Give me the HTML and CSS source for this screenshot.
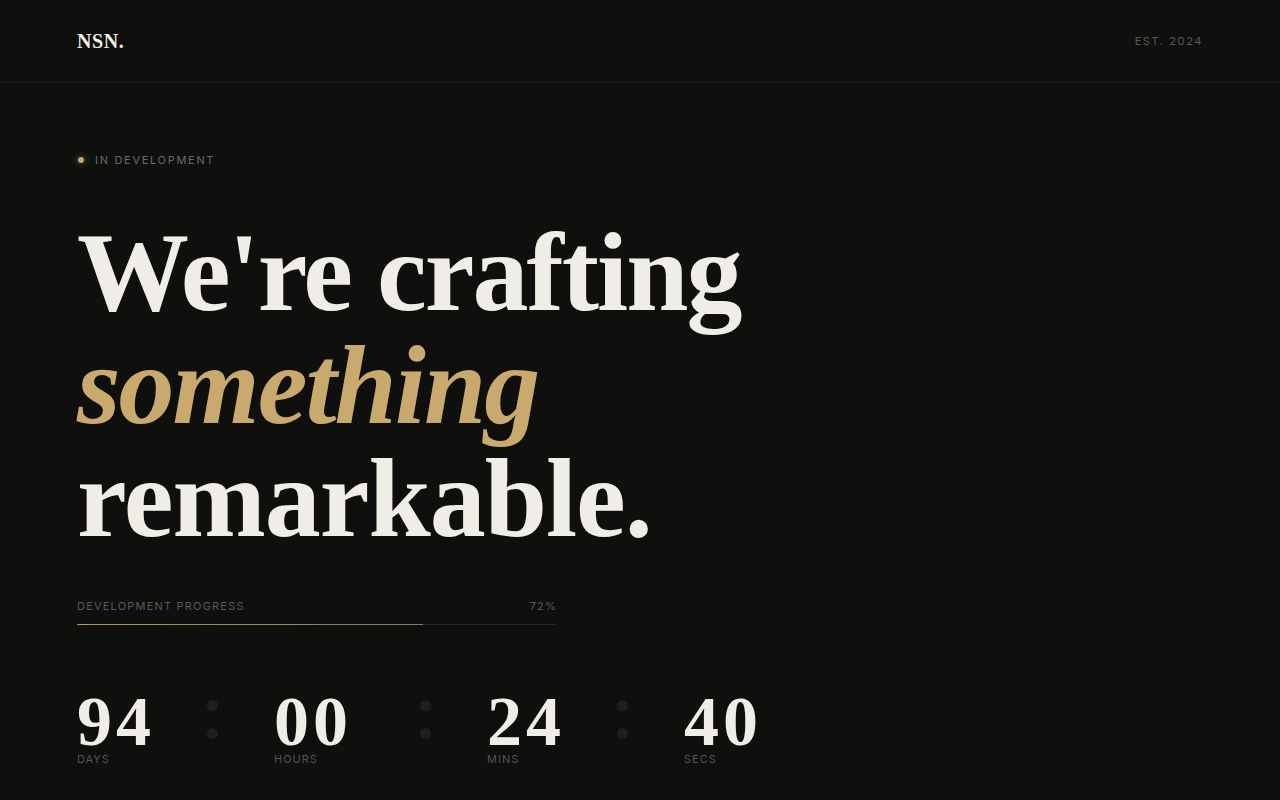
FILE: index.html
```html
<!DOCTYPE html>
<html lang="en">
<head>
<meta charset="utf-8">
<title>NSN. — In development</title>
<link rel="stylesheet" href="styles.css">
</head>
<body>
<header class="topbar">
  <div class="logo">NSN.</div>
  <div class="est">EST. 2024</div>
</header>
<main class="hero">
  <div class="badge"><span class="dot"></span><span class="badge-text">IN DEVELOPMENT</span></div>
  <h1 class="title">
    <span class="line">We're crafting</span>
    <span class="line accent">something</span>
    <span class="line last">remarkable.</span>
  </h1>
  <section class="progress">
    <div class="progress-head"><span>DEVELOPMENT PROGRESS</span><span>72%</span></div>
    <div class="track"><div class="fill" style="width:72%"></div></div>
  </section>
  <section class="timer">
    <div class="unit"><span class="num">94</span><span class="lbl">DAYS</span></div>
    <div class="colon"><span></span><span></span></div>
    <div class="unit wide"><span class="num">00</span><span class="lbl">HOURS</span></div>
    <div class="colon"><span></span><span></span></div>
    <div class="unit"><span class="num">24</span><span class="lbl">MINS</span></div>
    <div class="colon"><span></span><span></span></div>
    <div class="unit"><span class="num">40</span><span class="lbl">SECS</span></div>
  </section>
</main>
</body>
</html>
```
FILE: styles.css
```css
* { box-sizing: border-box; }
html, body { margin: 0; padding: 0; }
body {
  background: #0f0f0e;
  color: #efede6;
  font-family: Inter, "Liberation Sans", sans-serif;
  min-height: 800px;
  overflow: hidden;
}
.topbar {
  height: 83px;
  border-bottom: 1px solid #1c1c1b;
  display: flex;
  align-items: center;
  justify-content: space-between;
  padding: 0 77px;
}
.logo {
  font-family: "Liberation Serif", serif;
  font-weight: 700;
  font-size: 20px;
  letter-spacing: 0.6px;
  color: #f2f0ea;
}
.est {
  font-size: 11px;
  letter-spacing: 1.6px;
  color: #5a5a57;
}
.hero {
  padding: 70px 77px 0;
  display: flex;
  flex-direction: column;
  align-items: flex-start;
}
.badge {
  display: flex;
  align-items: center;
  gap: 11px;
  height: 14px;
}
.dot {
  width: 6px;
  height: 6px;
  border-radius: 50%;
  background: #c9a96e;
  box-shadow: 0 0 6px 2px rgba(201,169,110,0.25);
  margin-left: 1px;
}
.badge-text {
  font-size: 11px;
  letter-spacing: 1.7px;
  color: #6a6a66;
}
.title {
  margin: 49px 0 0;
  font-family: "Liberation Serif", serif;
  font-weight: 700;
  font-size: 112px;
  line-height: 113px;
  letter-spacing: -2px;
  color: #efede6;
}
.line { display: block; }
.last { letter-spacing: -1px; }
.accent {
  font-style: italic;
  color: #c9a96e;
}
.progress {
  width: 480px;
  margin-top: 44px;
}
.progress-head {
  display: flex;
  justify-content: space-between;
  font-size: 11px;
  line-height: 14px;
  letter-spacing: 1.2px;
  color: #5a5a57;
}
.track {
  margin-top: 11px;
  height: 1px;
  background: #242422;
}
.fill {
  height: 1px;
  background: linear-gradient(90deg, #b09664, #7c7a6e);
}
.timer {
  margin-top: 68px;
  display: flex;
  align-items: flex-start;
  gap: 56px;
}
.unit {
  display: flex;
  flex-direction: column;
  margin-right: -4px;
}
.unit.wide { min-width: 94px; }
.num {
  font-family: "Liberation Serif", serif;
  font-weight: 700;
  font-size: 70px;
  line-height: 58px;
  letter-spacing: 4px;
  color: #efede6;
}
.lbl {
  margin-top: 1px;
  font-size: 11px;
  line-height: 14px;
  letter-spacing: 1px;
  color: #555552;
}
.colon {
  display: flex;
  flex-direction: column;
  gap: 17px;
  margin-top: 7px;
}
.colon span {
  width: 11px;
  height: 11px;
  border-radius: 50%;
  background: #1f1f1e;
}
```
